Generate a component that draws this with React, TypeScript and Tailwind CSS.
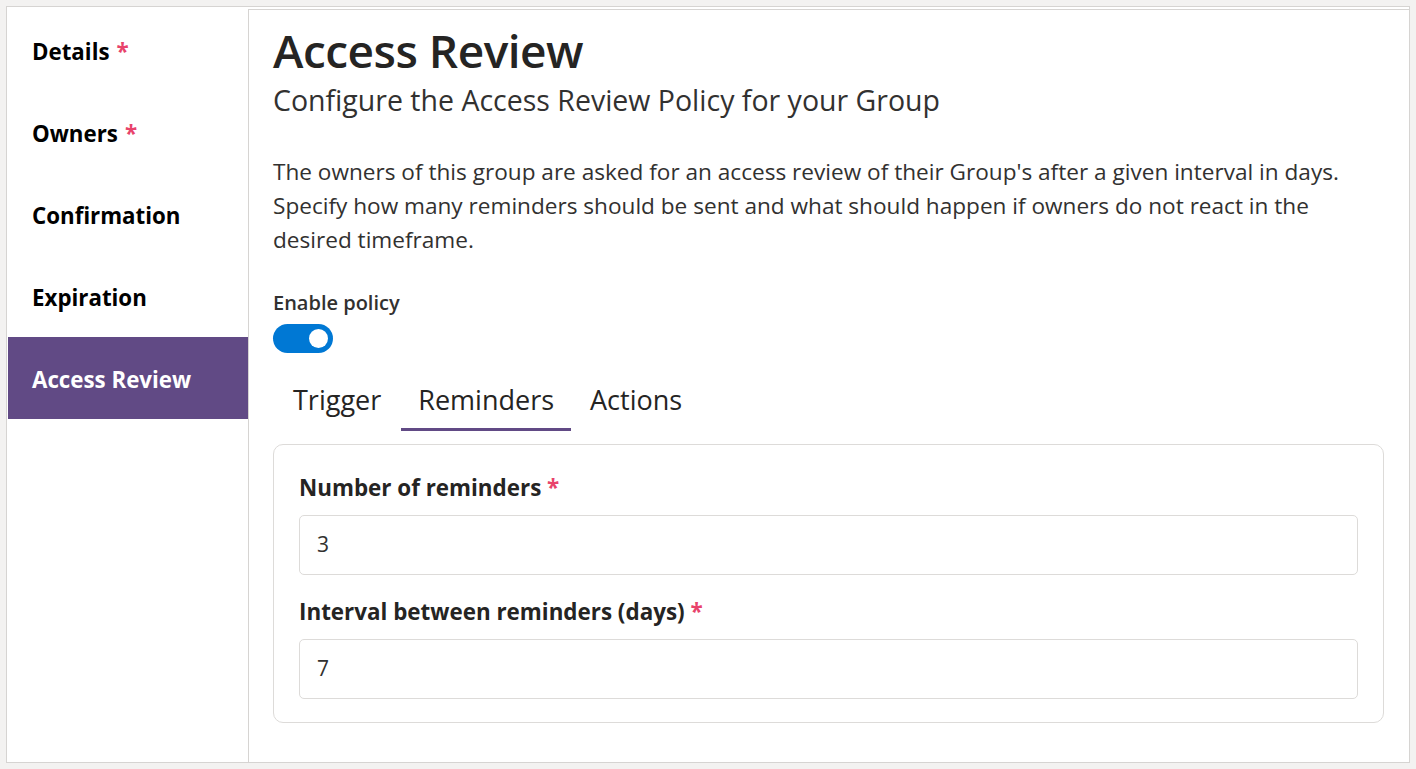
import React from "react";

const items = [
  { label: "Details", req: true },
  { label: "Owners", req: true },
  { label: "Confirmation", req: false },
  { label: "Expiration", req: false },
  { label: "Access Review", req: false, active: true },
];

export default function App() {
  return (
    <div
      className="w-[1416px] h-[769px] bg-[#f3f2f1] pt-[6px] pl-[6px] pr-[6px]"
      style={{ fontFamily: '"Open Sans", "Noto Sans", sans-serif' }}
    >
      <div className="flex h-[757px] bg-white border border-[#d6d4d2]">
        <div className="w-[241px] shrink-0 pt-[2px] pl-[1px]">
          {items.map((it) => (
            <div
              key={it.label}
              className={
                "h-[82px] flex items-center pl-[24px] pt-[4px] text-[22.3px] font-bold " +
                (it.active ? "bg-[#614a85] text-white" : "text-black")
              }
            >
              <span>{it.label}</span>
              {it.req && <span className="ml-[7px] text-[#e8436b]">*</span>}
            </div>
          ))}
        </div>
        <div className="flex-1 mt-[2px] border-l border-t border-[#d6d4d2] pl-[24px] pr-[25px] text-[#252423]">
          <h1 className="text-[46px] font-semibold leading-[56px] mt-[12px] tracking-[-0.5px]">Access Review</h1>
          <p className="text-[28.5px] leading-[36px] mt-[4px] text-[#323130]">
            Configure the Access Review Policy for your Group
          </p>
          <p className="text-[22.6px] leading-[34px] mt-[37px] text-[#323130]">
            The owners of this group are asked for an access review of their Group's after a given interval in days.
            Specify how many reminders should be sent and what should happen if owners do not react in the desired
            timeframe.
          </p>
          <div className="mt-[33px] text-[20px] font-semibold leading-[26px] text-[#323130]">Enable policy</div>
          <div className="mt-[8px] w-[60px] h-[29px] rounded-full bg-[#0078d4] flex items-center justify-end pr-[5px]">
            <div className="w-[19px] h-[19px] rounded-full bg-white" />
          </div>
          <div className="flex mt-[25px] text-[27px] leading-[44px] text-[#252423]">
            <div className="px-[20px] pb-[9px]">Trigger</div>
            <div className="px-[17px] pb-[6px] border-b-[3px] border-[#614a85]">Reminders</div>
            <div className="px-[19px] pb-[9px]">Actions</div>
          </div>
          <div className="mt-[13px] border border-[#dddbd9] rounded-[10px] px-[25px] pt-[27px] pb-[23px]">
            <div className="text-[22.4px] font-bold leading-[32px] text-[#252423]">
              Number of reminders <span className="text-[#e8436b]">*</span>
            </div>
            <div className="mt-[11px] h-[60px] border border-[#dddbd9] rounded-[5px] flex items-center px-[17px] text-[21px] text-[#323130]">
              3
            </div>
            <div className="mt-[21px] text-[22.4px] font-bold leading-[32px] text-[#252423]">
              Interval between reminders (days) <span className="text-[#e8436b]">*</span>
            </div>
            <div className="mt-[11px] h-[60px] border border-[#dddbd9] rounded-[5px] flex items-center px-[17px] text-[21px] text-[#323130]">
              7
            </div>
          </div>
        </div>
      </div>
    </div>
  );
}
